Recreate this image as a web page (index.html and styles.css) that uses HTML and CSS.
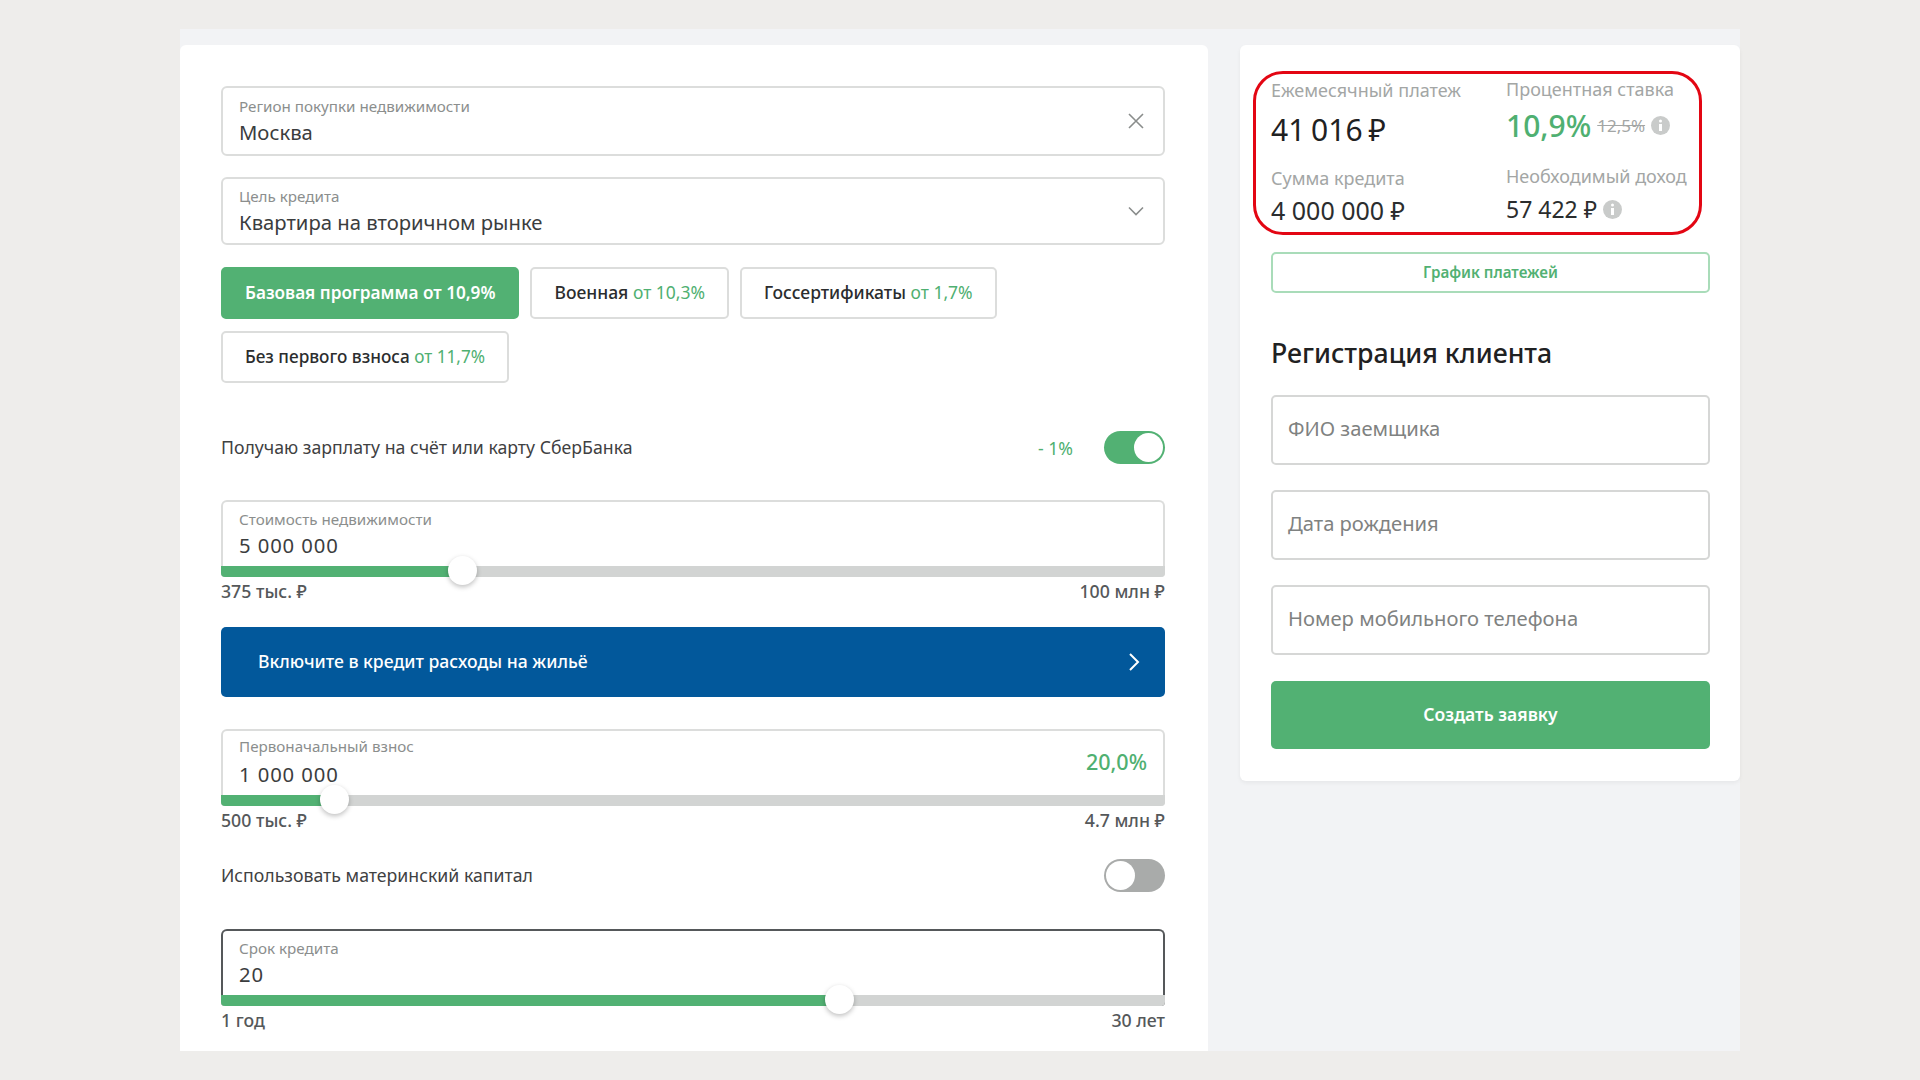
FILE: index.html
```html
<!DOCTYPE html>
<html lang="ru">

<head>
    <meta charset="UTF-8">
    <title>Ипотечный калькулятор</title>
    <link rel="stylesheet" href="styles.css">
</head>

<body>
    <div class="frame">
        <div class="card card-left">
            <div class="field field-region">
                <div class="field-text">
                    <div class="field-label">Регион покупки недвижимости</div>
                    <div class="field-value">Москва</div>
                </div>
                <svg class="field-icon" width="18" height="18" viewBox="0 0 18 18"><path d="M2 2 L16 16 M16 2 L2 16" fill="none" stroke="#8a8d8c" stroke-width="1.6"/></svg>
            </div>
            <div class="field field-goal">
                <div class="field-text">
                    <div class="field-label">Цель кредита</div>
                    <div class="field-value">Квартира на вторичном рынке</div>
                </div>
                <svg class="field-icon" width="18" height="18" viewBox="0 0 18 18"><path d="M2 5.5 L9 12.5 L16 5.5" fill="none" stroke="#8a8d8c" stroke-width="1.6"/></svg>
            </div>

            <div class="chips">
                <div class="chip chip-active">Базовая программа от 10,9%</div>
                <div class="chip">Военная <span class="green">от 10,3%</span></div>
                <div class="chip">Госсертификаты <span class="green">от 1,7%</span></div>
                <div class="chip chip-small">Без первого взноса <span class="green">от 11,7%</span></div>
            </div>

            <div class="switch-row switch-row-salary">
                <span>Получаю зарплату на счёт или карту СберБанка</span>
                <span class="green discount">- 1%</span>
                <div class="toggle toggle-on"><i></i></div>
            </div>

            <div class="slider-block slider-cost">
                <div class="slider-field">
                    <div class="field-label">Стоимость недвижимости</div>
                    <div class="field-value">5 000 000</div>
                    <div class="track">
                        <div class="fill" style="width: 241px"></div>
                        <div class="thumb" style="left: 241px"></div>
                    </div>
                </div>
                <div class="limits"><span>375 тыс. ₽</span><span>100 млн ₽</span></div>
            </div>

            <div class="promo">
                <span>Включите в кредит расходы на жильё</span>
                <svg width="14" height="20" viewBox="0 0 14 20"><path d="M3 2 L11 10 L3 18" fill="none" stroke="#fff" stroke-width="2"/></svg>
            </div>

            <div class="slider-block slider-first">
                <div class="slider-field">
                    <div class="field-label">Первоначальный взнос</div>
                    <div class="field-value">1 000 000</div>
                    <div class="percent green">20,0%</div>
                    <div class="track">
                        <div class="fill" style="width: 113px"></div>
                        <div class="thumb" style="left: 113px"></div>
                    </div>
                </div>
                <div class="limits"><span>500 тыс. ₽</span><span>4.7 млн ₽</span></div>
            </div>

            <div class="switch-row switch-row-capital">
                <span>Использовать материнский капитал</span>
                <div class="toggle"><i></i></div>
            </div>

            <div class="slider-block slider-term">
                <div class="slider-field slider-field-focus">
                    <div class="field-label">Срок кредита</div>
                    <div class="field-value">20</div>
                    <div class="track">
                        <div class="fill" style="width: 618px"></div>
                        <div class="thumb" style="left: 618px"></div>
                    </div>
                </div>
                <div class="limits"><span>1 год</span><span>30 лет</span></div>
            </div>
        </div>

        <div class="card card-right">
            <div class="summary">
                <div class="summary-col">
                    <div class="summary-label">Ежемесячный платеж</div>
                    <div class="summary-big">41 016 ₽</div>
                    <div class="summary-label summary-label-low">Сумма кредита</div>
                    <div class="summary-mid">4 000 000 ₽</div>
                </div>
                <div class="summary-col summary-col-right">
                    <div class="summary-label">Процентная ставка</div>
                    <div class="rate-line">
                        <span class="rate green">10,9%</span>
                        <span class="rate-old">12,5%</span>
                        <svg class="info" width="19" height="19" viewBox="0 0 19 19"><circle cx="9.5" cy="9.5" r="9.5" fill="#c9cbca"/><circle cx="9.5" cy="5" r="1.5" fill="#fff"/><rect x="8" y="8" width="3" height="7" fill="#fff"/></svg>
                    </div>
                    <div class="summary-label summary-label-income">Необходимый доход</div>
                    <div class="income-line">
                        <span class="income">57 422 ₽</span>
                        <svg class="info" width="19" height="19" viewBox="0 0 19 19"><circle cx="9.5" cy="9.5" r="9.5" fill="#c9cbca"/><circle cx="9.5" cy="5" r="1.5" fill="#fff"/><rect x="8" y="8" width="3" height="7" fill="#fff"/></svg>
                    </div>
                </div>
            </div>
            <div class="schedule-btn">График платежей</div>
            <h2>Регистрация клиента</h2>
            <div class="input">ФИО заемщика</div>
            <div class="input">Дата рождения</div>
            <div class="input">Номер мобильного телефона</div>
            <div class="submit">Создать заявку</div>
        </div>
    </div>
</body>

</html>
```

FILE: styles.css
```css
html,
body {
    margin: 0;
    height: 1080px;
    overflow: hidden;
}

body {
    font-family: "Noto Sans", "Open Sans", sans-serif;
    background-color: #eeedeb;
    color: #2b2d2e;
}

.green {
    color: #4fb071;
}

.frame {
    display: flex;
    gap: 32px;
    width: 1560px;
    height: 1022px;
    margin: 29px 0 0 180px;
    padding-top: 16px;
    box-sizing: border-box;
    background-color: #f2f3f5;
}

.card {
    background: white;
    border-radius: 6px 6px 0 0;
    box-sizing: border-box;
}

.card-left {
    width: 1028px;
    height: 1006px;
    padding: 41px 43px 0 41px;
}

.card-right {
    width: 500px;
    height: 736px;
    padding: 26px 30px 0 13px;
    border-radius: 6px;
    box-shadow: 0 2px 4px rgba(0, 0, 0, 0.05);
}

/* fields */
.field {
    display: flex;
    align-items: center;
    justify-content: space-between;
    box-sizing: border-box;
    padding: 0 18px 0 16px;
    border: 2px solid #dcdddc;
    border-radius: 6px;
}

.field-region {
    height: 70px;
    margin-bottom: 21px;
}

.field-goal {
    height: 68px;
    margin-bottom: 22px;
}

.field-label {
    font-size: 15.2px;
    line-height: 20px;
    color: #8b8e8d;
}

.field-value {
    font-size: 20.25px;
    line-height: 28px;
    margin-top: 2px;
    color: #3b3d3e;
}

/* chips */
.chips {
    display: flex;
    flex-wrap: wrap;
    gap: 12px 11px;
}

.chip {
    box-sizing: border-box;
    height: 52px;
    padding: 0 22px;
    line-height: 47px;
    font-size: 17.5px;
    font-weight: 500;
    border: 2px solid #dcdddc;
    border-radius: 5px;
    color: #2b2d2e;
}

.chip .green {
    font-weight: 400;
}

.chip-active {
    background-color: #52b173;
    border-color: #52b173;
    color: white;
    font-size: 17.2px;
    font-weight: 600;
}

.chip-small {
    font-size: 17.2px;
}

/* switch rows */
.switch-row {
    display: flex;
    align-items: center;
    font-size: 17.7px;
    color: #3f4142;
    height: 33px;
}

.switch-row span:first-child {
    flex: 1;
    margin-top: -2px;
}

.switch-row-salary {
    margin-top: 48px;
}

.switch-row-capital {
    margin-top: 27px;
}

.discount {
    margin-right: 31px;
}

.toggle {
    width: 61px;
    height: 33px;
    box-sizing: border-box;
    padding: 2px;
    border-radius: 17px;
    background-color: #a9abaa;
}

.toggle i {
    display: block;
    width: 29px;
    height: 29px;
    border-radius: 50%;
    background: white;
}

.toggle-on {
    background-color: #52b173;
}

.toggle-on i {
    margin-left: auto;
}

/* slider fields */
.slider-cost {
    margin-top: 36px;
}

.slider-first {
    margin-top: 32px;
}

.slider-term {
    margin-top: 37px;
}

.slider-field {
    position: relative;
    box-sizing: border-box;
    height: 77px;
    padding: 7px 16px 0;
    border: 2px solid #dcdddc;
    border-bottom: none;
    border-radius: 6px 6px 4px 4px;
}

.slider-field .field-value {
    letter-spacing: 0.9px;
}

.slider-first .slider-field {
    padding-top: 5px;
}

.slider-first .field-value {
    margin-top: 4px;
}

.slider-field-focus {
    border-color: #55585a;
}

.percent {
    position: absolute;
    right: 16px;
    top: 16px;
    font-size: 21.5px;
    font-weight: 500;
}

.track {
    position: absolute;
    left: -2px;
    right: -2px;
    bottom: 0;
    height: 11px;
    border-radius: 0 0 4px 4px;
    background-color: #d2d4d3;
}

.fill {
    height: 100%;
    border-radius: 0 0 0 4px;
    background-color: #52b173;
}

.thumb {
    position: absolute;
    top: -10px;
    width: 29px;
    height: 29px;
    margin-left: -14px;
    border-radius: 50%;
    background: white;
    box-shadow: 0 2px 5px rgba(0, 0, 0, 0.25);
}

.limits {
    display: flex;
    justify-content: space-between;
    margin-top: 2px;
    font-size: 17.7px;
    font-weight: 500;
    line-height: 24px;
    color: #55585a;
}

/* blue banner */
.promo {
    display: flex;
    align-items: center;
    justify-content: space-between;
    box-sizing: border-box;
    height: 70px;
    margin-top: 24px;
    padding: 0 24px 0 37px;
    border-radius: 5px;
    background-color: #02589b;
    color: white;
    font-size: 17.6px;
    font-weight: 500;
}

.promo span {
    margin-top: -2px;
}

/* right card */
.summary {
    display: flex;
    box-sizing: border-box;
    width: 449px;
    height: 164px;
    padding: 4px 0 0 15px;
    border: 3px solid #e30613;
    border-radius: 30px;
}

.summary-col {
    flex: none;
    width: 235px;
}

.summary-col-right {
    width: 190px;
    white-space: nowrap;
}

.summary-col-right .summary-label:first-child {
    margin-top: -1.5px;
}

.summary-label {
    font-size: 18px;
    line-height: 24px;
    color: #a3a6a5;
    white-space: nowrap;
}

.summary-big {
    font-size: 30px;
    word-spacing: -2px;
    line-height: 42px;
    margin-top: 7px;
    color: #1f2122;
}

.summary-label-low {
    margin-top: 14.5px;
}

.summary-mid {
    font-size: 25px;
    line-height: 32px;
    margin-top: 4px;
    color: #2b2d2e;
}

.rate-line,
.income-line {
    display: flex;
    align-items: center;
}

.rate-line {
    margin-top: 4px;
    height: 42px;
}

.rate {
    font-size: 30px;
    font-weight: 500;
}

.rate-old {
    margin: 0 6px;
    font-size: 17px;
    color: #a3a6a5;
    text-decoration: line-through;
}

.summary-label-income {
    margin-top: 17.5px;
}

.income-line {
    height: 32px;
    margin-top: 5px;
}

.income {
    margin-right: 6px;
    font-size: 23px;
    color: #2b2d2e;
}

.schedule-btn {
    box-sizing: border-box;
    width: 439px;
    height: 41px;
    margin: 17px 0 0 18px;
    border: 2px solid #a9dcb9;
    border-radius: 5px;
    text-align: center;
    line-height: 36px;
    font-size: 15.2px;
    font-weight: 600;
    color: #52b173;
}

h2 {
    margin: 41px 0 23px 18px;
    font-size: 26.7px;
    font-weight: 500;
    line-height: 38px;
    color: #1f2122;
}

.input {
    box-sizing: border-box;
    width: 439px;
    height: 70px;
    margin: 0 0 25px 18px;
    padding-left: 15px;
    border: 2px solid #d6d7d6;
    border-radius: 5px;
    font-size: 20.2px;
    line-height: 63px;
    color: #7f8281;
}

.submit {
    width: 439px;
    height: 68px;
    margin: 26px 0 0 18px;
    border-radius: 5px;
    background-color: #52b173;
    color: white;
    text-align: center;
    line-height: 66px;
    font-size: 17.5px;
    font-weight: 600;
}
```
